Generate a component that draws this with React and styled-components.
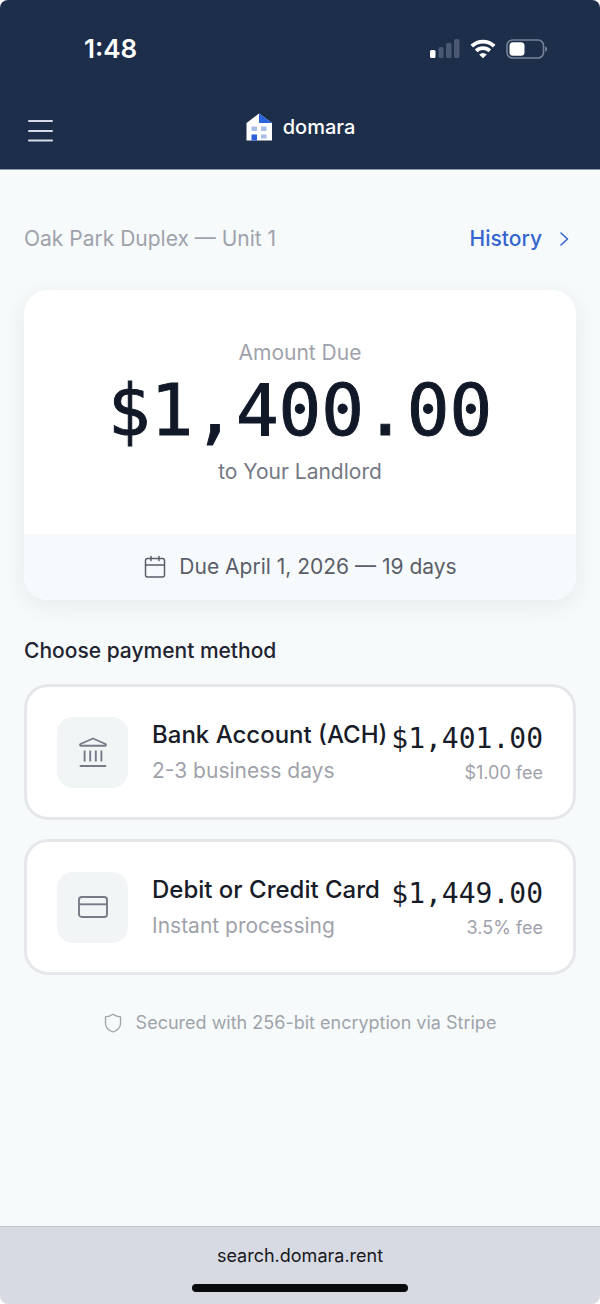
import React from 'react';
import styled, { createGlobalStyle } from 'styled-components';

const GlobalStyle = createGlobalStyle`
  * {
    box-sizing: border-box;
  }

  body {
    margin: 0;
    background: #fff;
    font-family: Inter, 'Liberation Sans', sans-serif;
    -webkit-font-smoothing: antialiased;
  }

  button {
    font-family: inherit;
  }
`;

const Screen = styled.div`
  display: flex;
  flex-direction: column;
  min-height: 100vh;
  background: #f6fafb;
  border-radius: 8px;
  overflow: hidden;
`;

const Header = styled.header`
  background: #1c2e4a;
  color: #fff;
  border-bottom: 1px solid #8e98a7;
`;

const StatusBar = styled.div`
  display: flex;
  align-items: center;
  justify-content: space-between;
  height: 84px;
  padding: 14px 52px 0 84px;
`;

const Time = styled.span`
  font-size: 26px;
  line-height: 32px;
  font-weight: 600;
`;

const StatusIcons = styled.div`
  display: flex;
  align-items: center;
  gap: 10px;
`;

const NavBar = styled.nav`
  display: grid;
  grid-template-columns: 1fr auto 1fr;
  align-items: center;
  height: 85px;
  padding: 0 24px;
`;

const MenuButton = styled.button`
  display: flex;
  justify-self: start;
  padding: 8px 0 0;
  border: 0;
  background: none;
  color: #d5dce8;
`;

const Brand = styled.a`
  display: flex;
  align-items: center;
  gap: 10px;
  color: #fff;
  font-size: 20px;
  line-height: 32px;
  font-weight: 500;
  text-decoration: none;
`;

const Main = styled.main`
  flex: 1;
  padding: 52px 24px 24px;
`;

const PropertyRow = styled.div`
  display: flex;
  align-items: center;
  justify-content: space-between;
  margin-bottom: 34px;
  font-size: 21px;
  line-height: 34px;
  color: #9fa2ab;
`;

const HistoryLink = styled.a`
  display: flex;
  align-items: center;
  gap: 10px;
  color: #3565ce;
  font-weight: 500;
  text-decoration: none;
`;

const AmountCard = styled.section`
  margin-bottom: 34px;
  border-radius: 24px;
  background: #fff;
  box-shadow: 0 6px 24px rgba(20, 30, 40, 0.07);
  overflow: hidden;
`;

const AmountBody = styled.div`
  padding: 46px 24px;
  text-align: center;
`;

const AmountLabel = styled.div`
  font-size: 21px;
  line-height: 34px;
  color: #9fa2ab;
`;

const Amount = styled.div`
  margin-bottom: 4px;
  font-family: 'DejaVu Sans Mono', monospace;
  font-size: 71px;
  line-height: 82px;
  color: #111827;
  -webkit-text-stroke: 1px #111827;
`;

const Payee = styled.div`
  font-size: 21px;
  line-height: 32px;
  color: #747884;
`;

const DueBar = styled.div`
  display: flex;
  align-items: center;
  justify-content: center;
  gap: 12px;
  height: 66px;
  background: #f7fafc;
  color: #5a5e69;
  font-size: 21px;
  line-height: 32px;
`;

const SectionTitle = styled.h2`
  margin: 0 0 16px;
  font-size: 21px;
  line-height: 34px;
  font-weight: 500;
  color: #1f2430;
`;

const MethodList = styled.div`
  display: flex;
  flex-direction: column;
  gap: 19px;
`;

const MethodButton = styled.button`
  display: flex;
  align-items: center;
  width: 100%;
  padding: 29px 30px;
  border: 3px solid #e6e7ea;
  border-radius: 24px;
  background: #fff;
  text-align: left;
`;

const MethodIcon = styled.span`
  display: flex;
  align-items: center;
  justify-content: center;
  flex-shrink: 0;
  width: 71px;
  height: 71px;
  margin-right: 24px;
  border-radius: 16px;
  background: #f1f5f6;
  color: #777b88;
`;

const MethodText = styled.span`
  display: flex;
  flex: 1;
  flex-direction: column;
  align-items: ${({ $end }) => ($end ? 'flex-end' : 'flex-start')};
  white-space: nowrap;
`;

const MethodName = styled.span`
  font-size: 24px;
  line-height: 38px;
  font-weight: 500;
  color: #171c28;
`;

const MethodNote = styled.span`
  font-size: 21px;
  line-height: 34px;
  color: #9fa2ab;
`;

const MethodTotal = styled.span`
  font-family: 'DejaVu Sans Mono', monospace;
  font-size: 28px;
  line-height: 42px;
  color: #171c28;
`;

const MethodFee = styled.span`
  font-size: 18px;
  line-height: 26px;
  color: #9fa2ab;
`;

const Secured = styled.div`
  display: flex;
  align-items: center;
  justify-content: center;
  gap: 14px;
  margin-top: 33px;
  font-size: 18px;
  line-height: 30px;
  color: #9fa4aa;
`;

const BrowserBar = styled.footer`
  display: flex;
  flex-direction: column;
  align-items: center;
  gap: 14px;
  padding: 15px 24px 12px;
  border-top: 1px solid #c6c8d0;
  background: #d8dae3;
  color: #16181c;
  font-size: 18px;
  line-height: 28px;
`;

const HomeIndicator = styled.div`
  width: 39%;
  height: 8px;
  border-radius: 4px;
  background: #080a0b;
`;

const SignalIcon = () => (
  <svg width="30" height="20" viewBox="0 0 30 20" fill="#4a5873" aria-hidden="true">
    <rect x="0" y="11" width="5.5" height="8" rx="1.5" fill="#fff" />
    <rect x="8.5" y="8" width="5" height="11" rx="1.5" />
    <rect x="16" y="4" width="5.5" height="15" rx="1.5" />
    <rect x="24" y="0" width="5.5" height="19" rx="1.5" />
  </svg>
);

const WifiIcon = () => (
  <svg width="26" height="20" viewBox="0 0 26 20" fill="none" stroke="#fff" strokeWidth="3.8" aria-hidden="true">
    <path d="M1.8 7.1a16 16 0 0 1 22.4 0" />
    <path d="M6.2 11.9a9.8 9.8 0 0 1 13.6 0" />
    <path d="M13 19.3l-3.8-3.7a5.4 5.4 0 0 1 7.6 0z" fill="#fff" stroke="none" />
  </svg>
);

const BatteryIcon = () => (
  <svg width="42" height="20" viewBox="0 0 42 20" fill="none" aria-hidden="true">
    <rect x="1" y="1" width="36.5" height="18" rx="5.5" stroke="#77829a" strokeWidth="1.6" />
    <rect x="3.5" y="3.2" width="15" height="13.6" rx="3.6" fill="#fff" />
    <path d="M39.3 7.2c2.2.8 2.2 4.8 0 5.6z" fill="#8b94a6" />
  </svg>
);

const MenuIcon = () => (
  <svg width="32" height="32" viewBox="0 0 32 32" stroke="currentColor" strokeWidth="2" strokeLinecap="round" aria-hidden="true">
    <path d="M5 6h23M5 16h23M5 25.5h23" />
  </svg>
);

const LogoIcon = () => (
  <svg width="28" height="28" viewBox="0 0 28 28" aria-hidden="true">
    <path d="M1.500 10L14 .5 27 10v17.500H1.500z" fill="#fff" />
    <path d="M14 .5L27 10H14z" fill="#2c61dc" />
    <path d="M6.500 13.500H12V18H6.500zM16 13.500h5.500V18H16zM16 21.500h5.500v4H16z" fill="#a9bde8" />
    <path d="M6.500 21.500H12v6H6.500z" fill="#2c61dc" />
  </svg>
);

const ChevronIcon = () => (
  <svg width="24" height="24" viewBox="0 0 24 24" fill="none" stroke="currentColor" strokeWidth="1.6" strokeLinecap="round" strokeLinejoin="round" aria-hidden="true">
    <path d="M9 6l6.5 6L9 18" />
  </svg>
);

const CalendarIcon = () => (
  <svg width="24" height="24" viewBox="0 0 24 24" fill="none" stroke="currentColor" strokeWidth="1.5" strokeLinecap="round" aria-hidden="true">
    <rect x="2.5" y="3.5" width="19" height="18.5" rx="2" />
    <path d="M2.5 10h19M8 1.5v4M16 1.5v4" />
  </svg>
);

const BankIcon = () => (
  <svg width="32" height="32" viewBox="0 0 32 32" fill="none" stroke="currentColor" strokeWidth="1.9" strokeLinecap="round" strokeLinejoin="round" aria-hidden="true">
    <path d="M16 2.5L28.5 8c.8.4.5 1.7-.4 1.700H3.900C3 9.700 2.700 8.400 3.500 8z" />
    <path d="M7.600 14.500v11M13.200 14.500v11M18.800 14.500v11M24.400 14.500v11" strokeLinecap="butt" />
    <path d="M3.500 30h25" />
  </svg>
);

const CardIcon = () => (
  <svg width="32" height="32" viewBox="0 0 32 32" fill="none" stroke="currentColor" strokeWidth="1.9" aria-hidden="true">
    <rect x="2" y="6" width="28" height="20" rx="2.8" />
    <path d="M2 13.3h28" />
  </svg>
);

const ShieldIcon = () => (
  <svg width="18" height="20" viewBox="0 0 18 20" fill="none" stroke="currentColor" strokeWidth="1.3" strokeLinejoin="round" aria-hidden="true">
    <path d="M9 1.2c2.2 1.6 4.6 2.4 7.5 2.6v6.7c0 4-3 6.9-7.5 8.5-4.5-1.6-7.5-4.5-7.5-8.5V3.800C4.400 3.600 6.800 2.800 9 1.200z" />
  </svg>
);

const methods = [
  {
    name: 'Bank Account (ACH)',
    note: '2-3 business days',
    total: '$1,401.00',
    fee: '$1.00 fee',
    icon: <BankIcon />,
  },
  {
    name: 'Debit or Credit Card',
    note: 'Instant processing',
    total: '$1,449.00',
    fee: '3.5% fee',
    icon: <CardIcon />,
  },
];

const App = () => {
  return (
    <Screen>
      <GlobalStyle />
      <Header>
        <StatusBar>
          <Time>1:48</Time>
          <StatusIcons>
            <SignalIcon />
            <WifiIcon />
            <BatteryIcon />
          </StatusIcons>
        </StatusBar>
        <NavBar>
          <MenuButton type="button" aria-label="Open menu">
            <MenuIcon />
          </MenuButton>
          <Brand href="#home">
            <LogoIcon />
            domara
          </Brand>
        </NavBar>
      </Header>

      <Main>
        <PropertyRow>
          <span>Oak Park Duplex — Unit 1</span>
          <HistoryLink href="#history">
            History
            <ChevronIcon />
          </HistoryLink>
        </PropertyRow>

        <AmountCard>
          <AmountBody>
            <AmountLabel>Amount Due</AmountLabel>
            <Amount>$1,400.00</Amount>
            <Payee>to Your Landlord</Payee>
          </AmountBody>
          <DueBar>
            <CalendarIcon />
            <span>Due April 1, 2026 — 19 days</span>
          </DueBar>
        </AmountCard>

        <SectionTitle>Choose payment method</SectionTitle>
        <MethodList>
          {methods.map((method) => (
            <MethodButton key={method.name} type="button">
              <MethodIcon>{method.icon}</MethodIcon>
              <MethodText>
                <MethodName>{method.name}</MethodName>
                <MethodNote>{method.note}</MethodNote>
              </MethodText>
              <MethodText $end>
                <MethodTotal>{method.total}</MethodTotal>
                <MethodFee>{method.fee}</MethodFee>
              </MethodText>
            </MethodButton>
          ))}
        </MethodList>

        <Secured>
          <ShieldIcon />
          <span>Secured with 256-bit encryption via Stripe</span>
        </Secured>
      </Main>

      <BrowserBar>
        <span>search.domara.rent</span>
        <HomeIndicator />
      </BrowserBar>
    </Screen>
  );
};

export default App;
